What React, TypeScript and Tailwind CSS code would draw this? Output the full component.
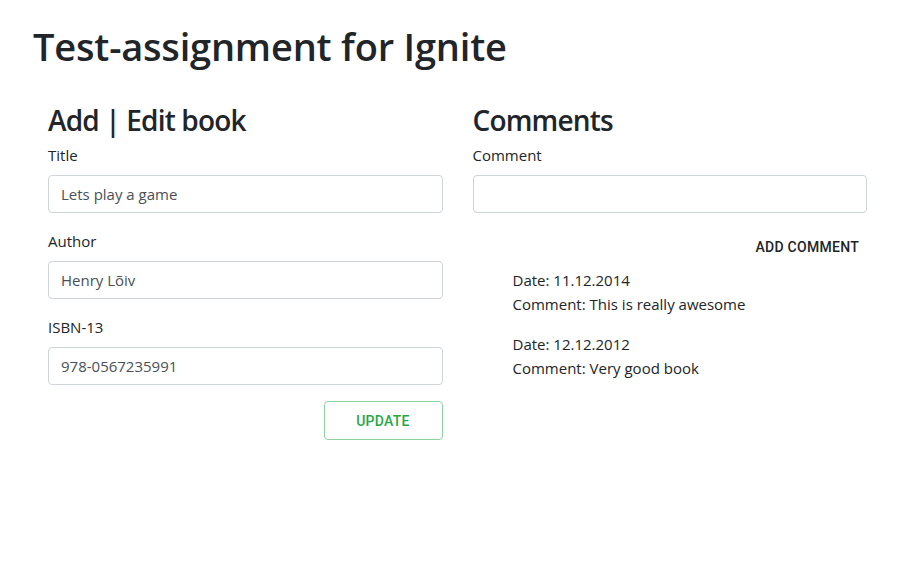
const comments = [
  { date: "11.12.2014", text: "This is really awesome" },
  { date: "12.12.2012", text: "Very good book" },
];

const Field = ({ label, value }: { label: string; value: string }) => {
  return (
    <div className="mb-4 flex flex-col">
      <label className="mb-2 text-[15px] leading-6">{label}</label>
      <input
        defaultValue={value}
        className="h-[38px] w-full rounded border border-[#ced4da] px-3 text-[15px] text-[#495057] outline-none"
      />
    </div>
  );
};

export default function App() {
  return (
    <div
      className="min-h-[570px] bg-white px-[33px] pt-[22px] text-[#212529]"
      style={{ fontFamily: '"Open Sans", "Noto Sans", sans-serif' }}
    >
      <h1 className="text-[38px] font-semibold leading-[48px] tracking-[-0.005em]">
        Test-assignment for Ignite
      </h1>
      <div className="mt-[31px] grid grid-cols-2 gap-[30px] pl-[15px]">
        <div className="flex flex-col">
          <h2 className="mb-1 text-[28px] font-semibold leading-[38px] tracking-[-0.03em]">
            Add | Edit book
          </h2>
          <Field label="Title" value="Lets play a game" />
          <Field label="Author" value="Henry Lõiv" />
          <Field label="ISBN-13" value="978-0567235991" />
          <div className="flex justify-end">
            <button
              className="h-[39px] w-[119px] rounded border border-[#8fd19e] pt-px text-sm font-medium uppercase tracking-[0.02em] text-[#28a745]"
              style={{ fontFamily: "Roboto, sans-serif" }}
            >
              Update
            </button>
          </div>
        </div>
        <div className="flex flex-col">
          <h2 className="mb-1 text-[28px] font-semibold leading-[38px] tracking-[-0.03em]">
            Comments
          </h2>
          <div className="flex flex-col">
            <label className="mb-2 text-[15px] leading-6">Comment</label>
            <input className="h-[38px] w-full rounded border border-[#ced4da] px-3 text-[15px] text-[#495057] outline-none" />
          </div>
          <div className="mt-4 flex justify-end">
            <button
              className="h-9 px-2 text-sm font-medium uppercase tracking-[0.02em] text-[#212529]"
              style={{ fontFamily: "Roboto, sans-serif" }}
            >
              Add comment
            </button>
          </div>
          <ul className="mt-[3px] pl-10">
            {comments.map((c) => (
              <li key={c.date} className="mb-4 text-[15px] leading-6">
                <div>Date: {c.date}</div>
                <div>Comment: {c.text}</div>
              </li>
            ))}
          </ul>
        </div>
      </div>
    </div>
  );
}
